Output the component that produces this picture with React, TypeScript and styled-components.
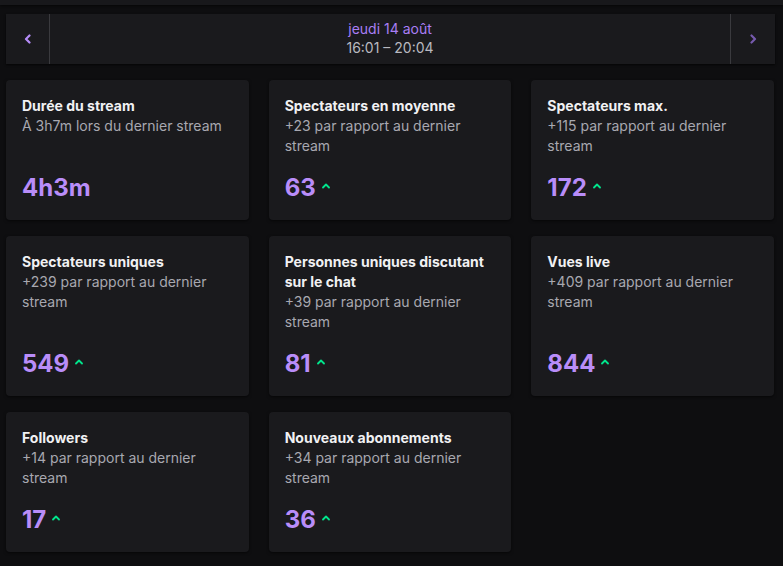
import React from "react";
import styled, { createGlobalStyle } from "styled-components";

const Global = createGlobalStyle`
  html, body { margin: 0; padding: 0; background: #0e0e10; }
  body { font-family: Inter, "Noto Sans", sans-serif; color: #efeff1; }
`;

const Page = styled.div`
  min-height: 566px;
  display: flex;
  flex-direction: column;
`;

const TopStrip = styled.div`
  height: 5px;
  background: #18181b;
  box-shadow: 0 1px 3px rgba(0, 0, 0, 0.6);
`;

const Content = styled.main`
  width: 769px;
  padding: 9px 0 0 6px;
  display: flex;
  flex-direction: column;
  gap: 16px;
`;

const DateBar = styled.div`
  height: 50px;
  display: flex;
  background: #1a1a1d;
  box-shadow: 0 1px 2px rgba(0, 0, 0, 0.7);
`;

const NavButton = styled.button<{ $side: "left" | "right"; $dim?: boolean }>`
  width: ${(p) => (p.$side === "left" ? 44 : 45)}px;
  flex: none;
  display: flex;
  align-items: center;
  justify-content: center;
  background: transparent;
  border: none;
  padding: 0;
  ${(p) => (p.$side === "left" ? "border-right" : "border-left")}: 1px solid #3a3a3e;
  color: ${(p) => (p.$dim ? "#765aad" : "#b58cf8")};
  cursor: pointer;
`;

const DateCenter = styled.div`
  flex: 1;
  display: flex;
  flex-direction: column;
  align-items: center;
  justify-content: center;
  font-size: 14px;
  line-height: 19px;
  padding-bottom: 3px;
`;

const DateLabel = styled.div`
  color: #a97ef5;
`;

const TimeLabel = styled.div`
  color: #b9b9c0;
`;

const Grid = styled.div`
  width: 768px;
  display: grid;
  grid-template-columns: repeat(3, 1fr);
  column-gap: 20px;
  row-gap: 16px;
`;

const Card = styled.section`
  background: #1a1a1d;
  border-radius: 4px;
  box-shadow: 0 1px 3px rgba(0, 0, 0, 0.6);
  padding: 16px;
  display: flex;
  flex-direction: column;
`;

const Title = styled.h3`
  margin: 0;
  font-size: 14px;
  font-weight: 700;
  line-height: 20px;
  color: #f1f1f3;
`;

const Sub = styled.p`
  margin: 0;
  font-size: 14px;
  line-height: 20px;
  color: #a8a8b0;
`;

const ValueRow = styled.div`
  margin-top: auto;
  padding-top: 16px;
  display: flex;
  align-items: center;
  gap: 6px;
`;

const Value = styled.span`
  font-size: 24px;
  font-weight: 700;
  line-height: 32px;
  color: #b98df9;
`;

const Up = styled.span`
  display: flex;
  color: #00e58c;
  margin-top: -4px;
`;

const ChevronLeft = () => (
  <svg width="8" height="10" viewBox="0 0 8 10" fill="none">
    <polyline points="5.5,1.5 2,5 5.5,8.5" stroke="currentColor" strokeWidth="2.2" strokeLinecap="round" strokeLinejoin="round" />
  </svg>
);

const ChevronRight = () => (
  <svg width="8" height="10" viewBox="0 0 8 10" fill="none">
    <polyline points="2.5,1.5 6,5 2.5,8.5" stroke="currentColor" strokeWidth="2.2" strokeLinecap="round" strokeLinejoin="round" />
  </svg>
);

const CaretUp = () => (
  <svg width="8" height="6" viewBox="0 0 8 6" fill="none">
    <polyline points="1,4.5 4,1.5 7,4.5" stroke="currentColor" strokeWidth="1.8" strokeLinecap="round" strokeLinejoin="round" />
  </svg>
);

type Stat = { title: string; sub: string; value: string; up?: boolean };

const stats: Stat[] = [
  { title: "Durée du stream", sub: "À 3h7m lors du dernier stream", value: "4h3m" },
  { title: "Spectateurs en moyenne", sub: "+23 par rapport au dernier stream", value: "63", up: true },
  { title: "Spectateurs max.", sub: "+115 par rapport au dernier stream", value: "172", up: true },
  { title: "Spectateurs uniques", sub: "+239 par rapport au dernier stream", value: "549", up: true },
  { title: "Personnes uniques discutant sur le chat", sub: "+39 par rapport au dernier stream", value: "81", up: true },
  { title: "Vues live", sub: "+409 par rapport au dernier stream", value: "844", up: true },
  { title: "Followers", sub: "+14 par rapport au dernier stream", value: "17", up: true },
  { title: "Nouveaux abonnements", sub: "+34 par rapport au dernier stream", value: "36", up: true },
];

export default function App() {
  return (
    <>
      <Global />
      <Page>
        <TopStrip />
        <Content>
          <DateBar>
            <NavButton $side="left" aria-label="Précédent">
              <ChevronLeft />
            </NavButton>
            <DateCenter>
              <DateLabel>jeudi 14 août</DateLabel>
              <TimeLabel>16:01 – 20:04</TimeLabel>
            </DateCenter>
            <NavButton $side="right" $dim aria-label="Suivant">
              <ChevronRight />
            </NavButton>
          </DateBar>
          <Grid>
            {stats.map((s) => (
              <Card key={s.title}>
                <Title>{s.title}</Title>
                <Sub>{s.sub}</Sub>
                <ValueRow>
                  <Value>{s.value}</Value>
                  {s.up && (
                    <Up>
                      <CaretUp />
                    </Up>
                  )}
                </ValueRow>
              </Card>
            ))}
          </Grid>
        </Content>
      </Page>
    </>
  );
}
